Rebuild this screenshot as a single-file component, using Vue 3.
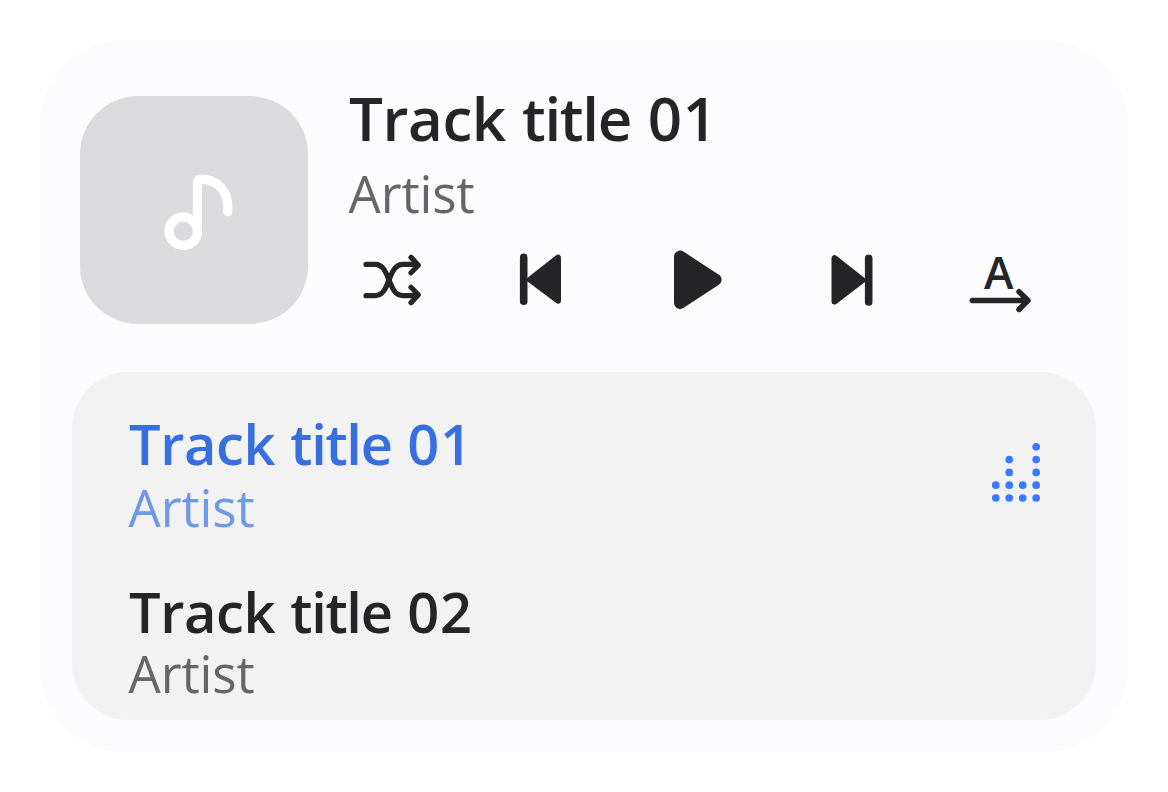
<script setup>
const levels = [2, 4, 2, 5]
const dots = levels.flatMap((n, c) =>
  Array.from({ length: n }, (_, r) => ({ x: 3.8 + c * 13.45, y: 55 - r * 12.8 }))
)
const tracks = [
  { number: '01', active: true },
  { number: '02', active: false },
]
</script>

<template>
  <main class="page">
    <section class="card">
      <header class="player">
        <div class="art">
          <svg width="228" height="228" viewBox="80 96 228 228" fill="none" stroke="#fff" stroke-width="9.2" stroke-linecap="round">
            <circle cx="183.3" cy="231.2" r="14.2" />
            <path d="M197.4 231V182.5Q197.4 179.1 201 179.1C217 179.1 227.8 191.5 227.8 206V212" />
          </svg>
        </div>
        <div class="info">
          <h1 class="title now"><span>Track</span> <span class="word">title</span> <span class="num">01</span></h1>
          <p class="artist">Artist</p>
          <svg class="controls" width="700" height="80" viewBox="348 240 700 80" fill="none" stroke="#252527" stroke-linecap="round" stroke-linejoin="round">
            <g stroke-width="5.2">
              <path d="M366 264.4H375C391 264.4 387 295.7 403 295.7H417" />
              <path d="M366 295.7H375C391 295.7 387 264.4 403 264.4H417" />
              <path d="M411 257.3L418.3 265.2L411 272.8M411 287.2L418.3 294.8L411 302.7" />
            </g>
            <path d="M523.7 257.4V301.3" stroke-width="7.6" />
            <path d="M558 257.7V300.7L530 279.5Z" fill="#252527" stroke-width="6" />
            <path d="M680 256.5V303L715.6 279.8Z" fill="#252527" stroke-width="12" />
            <path d="M834.5 258.2V301.5L862.5 280Z" fill="#252527" stroke-width="6" />
            <path d="M868.7 258.2V302" stroke-width="7.6" />
            <text class="letter" x="984" y="289" textLength="29.5" lengthAdjust="spacingAndGlyphs">A</text>
            <path d="M972.2 300.5H1026M1019 291.7L1028 300.5L1019 309.5" stroke-width="5.4" />
          </svg>
        </div>
      </header>
      <div class="list">
        <div v-for="t in tracks" :key="t.number" class="row" :class="{ active: t.active }">
          <div>
            <h2 class="title"><span>Track</span> <span class="word">title</span> <span class="num">{{ t.number }}</span></h2>
            <p class="artist">Artist</p>
          </div>
          <svg v-if="t.active" class="bars" width="48" height="59" viewBox="0 0 48 59" fill="#3a7afe">
            <circle v-for="(d, i) in dots" :key="i" :cx="d.x" :cy="d.y" r="3.85" />
          </svg>
        </div>
      </div>
    </section>
  </main>
</template>

<style>
body { background: #fff; }
</style>

<style scoped>
* { box-sizing: border-box; margin: 0; }
.page { width: 1168px; height: 792px; padding: 40px; font-family: "Open Sans", "Noto Sans", sans-serif; }
.card { width: 1088px; height: 712px; padding: 56px 32px 32px; border-radius: 84px; background: #fcfcff; }
.player { display: flex; gap: 40px; height: 276px; padding-left: 8px; }
.art { width: 228px; height: 228px; border-radius: 58px; background: #dbdbdd; flex: none; }
.art svg, .controls, .bars { display: block; }
.info { display: flex; flex-direction: column; }
.title { padding-left: 1px; font-weight: 650; font-size: 56px; line-height: 68px; letter-spacing: -0.4px; color: #252527; white-space: nowrap; }
.title.now { font-size: 60px; line-height: 72px; margin-top: -14px; }
.word { letter-spacing: -1.3px; margin: 0 1.5px 0 1px; }
.num { letter-spacing: 0.7px; }
.artist { font-size: 51px; font-weight: 440; line-height: 60px; letter-spacing: -0.1px; padding-left: 0.5px; color: #666668; }
.info .artist { margin-top: 9px; }
.controls { margin-top: 17px; flex: none; }
.letter { font-size: 46px; font-weight: 540; fill: #252527; stroke: none; }
.list { height: 348px; padding: 37px 56px 0; border-radius: 56px; background: #f2f2f2; overflow: hidden; }
.row { display: flex; justify-content: space-between; height: 168px; }
.row + .row .artist { line-height: 56px; }
.bars { margin-top: 34px; }
.active .title { color: #386fdf; }
.active .artist { color: #6f98e6; }
</style>
